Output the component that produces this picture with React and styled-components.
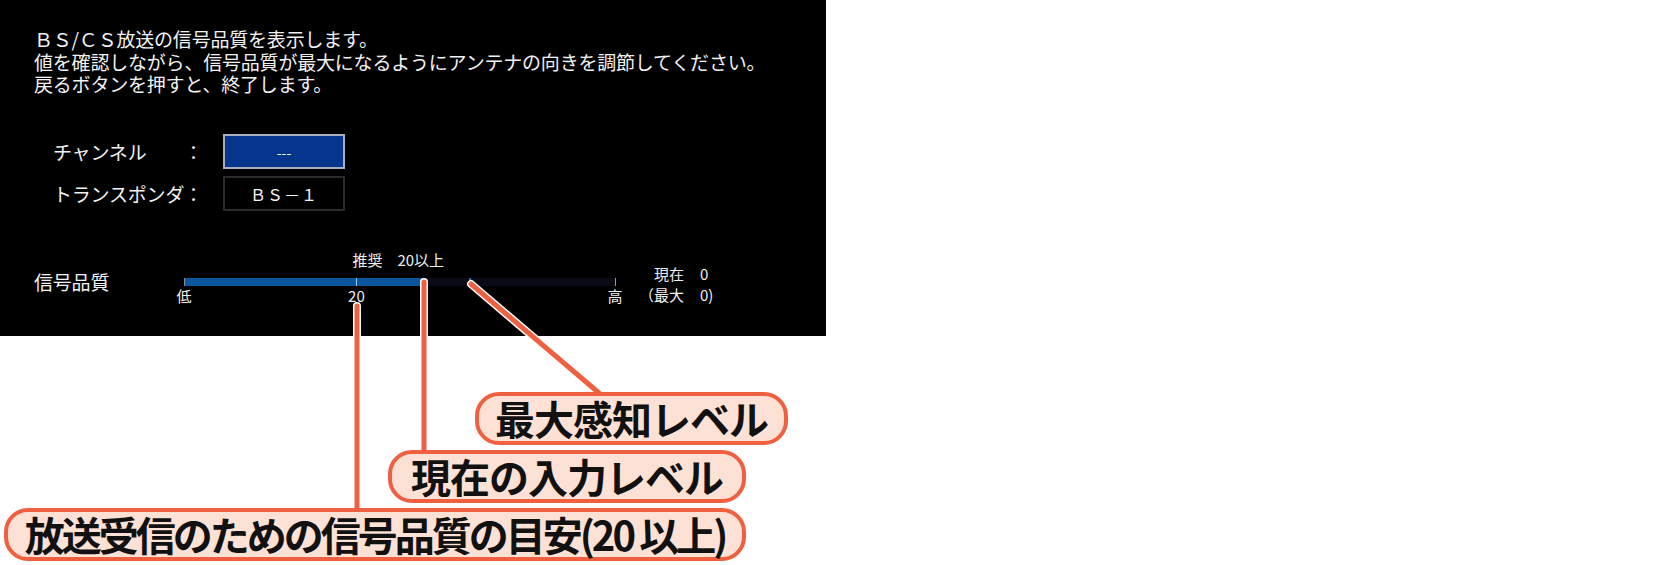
import React from "react";
import styled, { createGlobalStyle } from "styled-components";

const GlobalStyle = createGlobalStyle`
  html, body {
    margin: 0;
    padding: 0;
    background: #ffffff;
  }
  body {
    font-family: "Noto Sans CJK JP", "Noto Sans", sans-serif;
  }
`;

const ORANGE = "#ee6040";
const PEACH = "#fde1d4";

// scale of the quality meter: 0..50
const SCALE_MAX = 50;
const RECOMMENDED = 20;
const CURRENT_LEVEL = 27.85;
const PEAK_LEVEL = 33.2;
const pct = (v) => (v / SCALE_MAX) * 100;

const Page = styled.div`
  position: relative;
  width: 1655px;
  height: 565px;
  overflow: hidden;
`;

const Screen = styled.section`
  width: 826px;
  height: 336px;
  box-sizing: border-box;
  padding: 28px 0 0 34px;
  background: #000;
  color: #f2f2f2;
  font-family: "Noto Sans CJK JP", sans-serif;
  font-size: 19px;
  letter-spacing: -0.2px;
`;

const Intro = styled.div`
  line-height: 22.7px;
`;

const IntroLine = styled.div`
  white-space: nowrap;
`;

const Settings = styled.div`
  margin: 38px 0 0 19px;
  display: grid;
  grid-template-columns: 131px 39px 122px;
  grid-auto-rows: 35px;
  row-gap: 7px;
  align-items: center;
`;

const FieldLabel = styled.div`
  white-space: nowrap;
`;

const Colon = styled.div``;

const ValueBox = styled.div`
  height: 35px;
  box-sizing: border-box;
  display: flex;
  align-items: center;
  justify-content: center;
  font-size: ${(p) => (p.$active ? "14px" : "16px")};
  letter-spacing: ${(p) => (p.$active ? "0" : "1px")};
  color: #f4f4f4;
  background: ${(p) => (p.$active ? "#05358c" : "#000")};
  border: 2px solid ${(p) => (p.$active ? "#a7aebf" : "#2c2c2c")};
`;

const QualityRow = styled.div`
  margin-top: 40px;
  display: grid;
  grid-template-columns: 150px 431px auto;
  align-items: start;
`;

const QualityLabel = styled.div`
  padding-top: 20px;
  line-height: 22.7px;
`;

const Meter = styled.div`
  display: flex;
  flex-direction: column;
`;

const SmallText = styled.span`
  font-size: 15px;
  line-height: 18px;
  letter-spacing: 0;
  white-space: nowrap;
  color: #f0f0f0;
`;

const RecommendLabel = styled(SmallText)`
  display: block;
  margin-left: calc(${(p) => p.$at}% - 4px);
`;

const Bar = styled.div`
  position: relative;
  margin-top: 9px;
  height: 8px;
  background: #0a0a14;
`;

const BarFill = styled.div`
  height: 100%;
  background: #0b579f;
`;

const Tick = styled.div`
  position: absolute;
  top: 0;
  width: ${(p) => (p.$peak ? "2px" : "1px")};
  height: ${(p) => (p.$peak ? "6px" : "8px")};
  margin-left: ${(p) => (p.$peak ? "-1px" : "0")};
  background: ${(p) => p.$color};
`;

const AxisLabels = styled.div`
  position: relative;
  height: 18px;
  margin-top: 1px;
`;

const AxisLabel = styled(SmallText)`
  position: absolute;
  top: 0;
  transform: translateX(-50%);
`;

const Readout = styled.div`
  margin: 12px 0 0 19px;
  display: grid;
  grid-template-columns: 50px auto;
  column-gap: 16px;
  grid-auto-rows: 21px;
  align-items: center;
`;

const ReadoutLabel = styled(SmallText)`
  text-align: right;
`;

const Callouts = styled.div`
  position: relative;
  z-index: 2;
  padding-top: 56px;
  display: flex;
  flex-direction: column;
  gap: 5px;
`;

const Pill = styled.div`
  margin-left: ${(p) => p.$left}px;
  width: ${(p) => p.$width}px;
  height: 53px;
  box-sizing: border-box;
  border: 4px solid ${ORANGE};
  border-radius: 24px;
  background: ${PEACH};
  display: flex;
  align-items: center;
  justify-content: center;
  font-family: "Noto Sans CJK JP", sans-serif;
  font-weight: 700;
  font-size: 40px;
  letter-spacing: ${(p) => p.$tracking}px;
  color: #111;
  white-space: nowrap;
  line-height: 1;
  padding-bottom: 2px;
`;

const Leaders = styled.svg`
  position: absolute;
  left: 0;
  top: 0;
  z-index: 1;
  pointer-events: none;
`;

function LeaderLine({ x1, y1, x2, y2 }) {
  return (
    <g strokeLinecap="round">
      <line x1={x1} y1={y1} x2={x2} y2={y2} stroke="#ffffff" strokeWidth="8" />
      <line x1={x1} y1={y1} x2={x2} y2={y2} stroke={ORANGE} strokeWidth="5" />
    </g>
  );
}

export default function App() {
  return (
    <Page>
      <GlobalStyle />
      <Screen>
        <Intro>
          <IntroLine>ＢＳ/ＣＳ放送の信号品質を表示します。</IntroLine>
          <IntroLine>値を確認しながら、信号品質が最大になるようにアンテナの向きを調節してください。</IntroLine>
          <IntroLine>戻るボタンを押すと、終了します。</IntroLine>
        </Intro>

        <Settings>
          <FieldLabel>チャンネル</FieldLabel>
          <Colon>：</Colon>
          <ValueBox $active>---</ValueBox>
          <FieldLabel>トランスポンダ</FieldLabel>
          <Colon>：</Colon>
          <ValueBox>ＢＳ－１</ValueBox>
        </Settings>

        <QualityRow>
          <QualityLabel>信号品質</QualityLabel>
          <Meter>
            <RecommendLabel $at={pct(RECOMMENDED)}>推奨　20以上</RecommendLabel>
            <Bar>
              <BarFill style={{ width: `${pct(CURRENT_LEVEL)}%` }} />
              <Tick $color="#8a8a8a" style={{ left: "0%" }} />
              <Tick $color="#a9c6e4" style={{ left: `${pct(RECOMMENDED)}%` }} />
              <Tick $color="#9a9a9a" style={{ left: "100%" }} />
              <Tick $peak $color="#1f6fc0" style={{ left: `${pct(PEAK_LEVEL)}%` }} />
            </Bar>
            <AxisLabels>
              <AxisLabel style={{ left: "0%" }}>低</AxisLabel>
              <AxisLabel style={{ left: `${pct(RECOMMENDED)}%` }}>20</AxisLabel>
              <AxisLabel style={{ left: "100%" }}>高</AxisLabel>
            </AxisLabels>
          </Meter>
          <Readout>
            <ReadoutLabel>現在</ReadoutLabel>
            <SmallText>0</SmallText>
            <ReadoutLabel>（最大</ReadoutLabel>
            <SmallText>0)</SmallText>
          </Readout>
        </QualityRow>
      </Screen>

      <Leaders width="1655" height="565" viewBox="0 0 1655 565">
        <LeaderLine x1={357} y1={306} x2={357} y2={510} />
        <LeaderLine x1={424} y1={282} x2={424} y2={452} />
        <LeaderLine x1={471} y1={284} x2={599} y2={393} />
      </Leaders>

      <Callouts>
        <Pill $left={475} $width={313} $tracking={-1}>最大感知レベル</Pill>
        <Pill $left={388} $width={358} $tracking={-1}>現在の入力レベル</Pill>
        <Pill $left={4} $width={742} $tracking={-3}>放送受信のための信号品質の目安(20 以上)</Pill>
      </Callouts>
    </Page>
  );
}
